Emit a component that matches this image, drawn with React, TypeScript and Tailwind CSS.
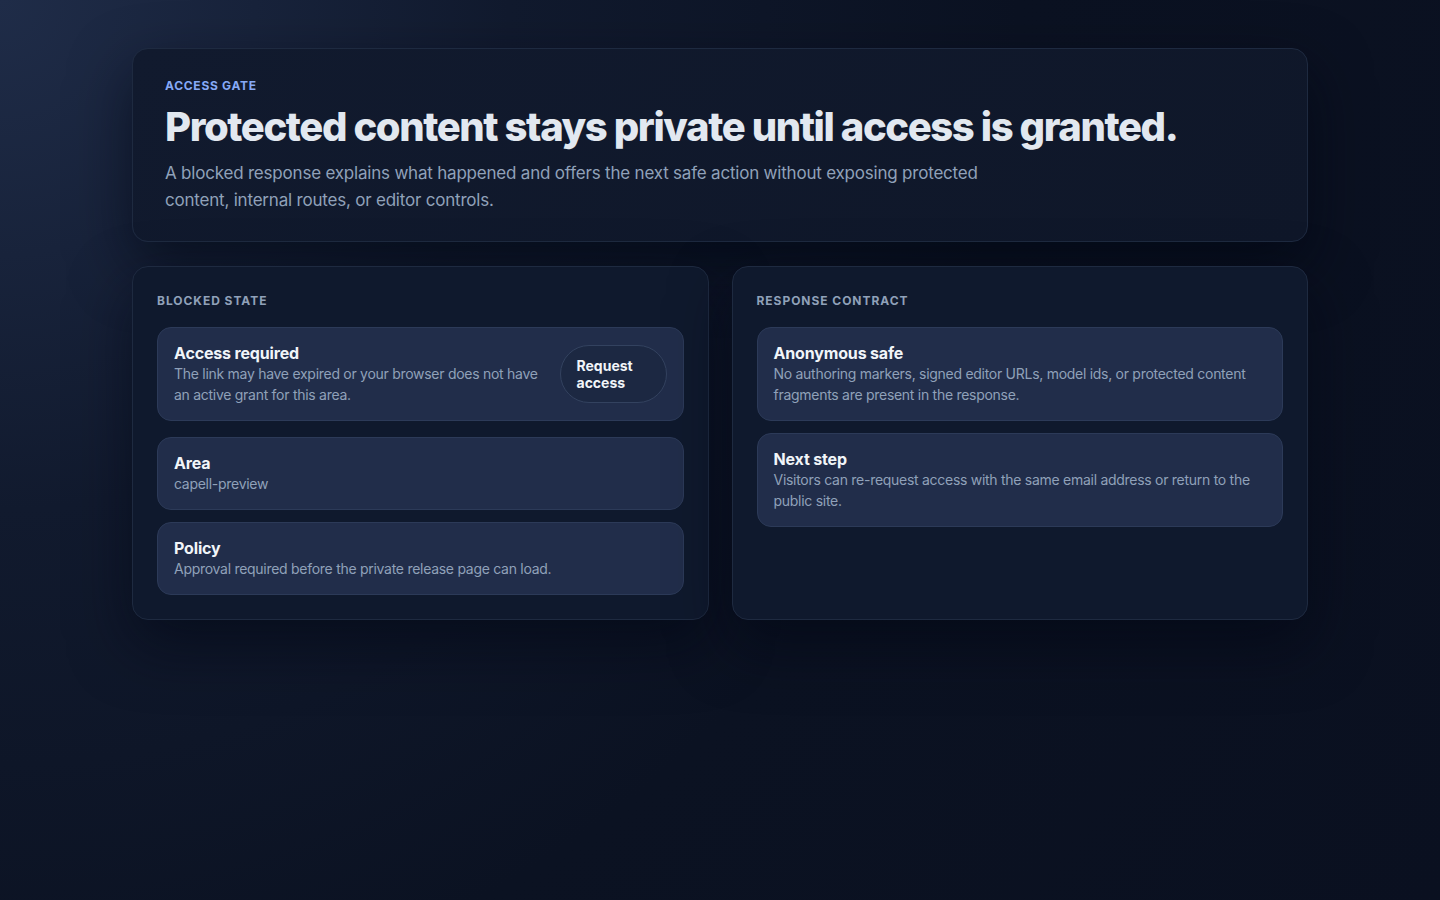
const blocked = [
    { title: "Area", body: "capell-preview" },
    { title: "Policy", body: "Approval required before the private release page can load." },
];

const contract = [
    {
        title: "Anonymous safe",
        body: "No authoring markers, signed editor URLs, model ids, or protected content fragments are present in the response.",
    },
    {
        title: "Next step",
        body: "Visitors can re-request access with the same email address or return to the public site.",
    },
];

const Item = ({ title, body }: { title: string; body: string }) => (
    <div className="rounded-[14px] border border-[#2c3a58] bg-[#212d4a] px-4 py-[15px]">
        <p className="text-base font-bold leading-5 tracking-[-0.01em] text-slate-100">{title}</p>
        <p className="text-sm leading-[21px] tracking-[-0.02em] text-slate-400">{body}</p>
    </div>
);

const Panel = ({ label, children }: { label: string; children: React.ReactNode }) => (
    <section className="rounded-2xl border border-[#1e2a40] bg-[#0f192d] p-6 shadow-[0_24px_60px_rgba(2,6,18,0.55)]">
        <h2 className="mb-[18px] mt-[2px] text-xs font-bold uppercase leading-4 tracking-[0.08em] text-slate-400">{label}</h2>
        {children}
    </section>
);

const App = () => {
    return (
        <div
            className="min-h-screen bg-[radial-gradient(circle_at_0%_0%,#1f2c48_0%,#111a2e_30%,#0b1222_60%,#0a1020_100%)] pt-12 text-slate-200"
            style={{ fontFamily: "Inter, 'Noto Sans', sans-serif" }}
        >
            <div className="mx-auto flex w-[1176px] flex-col gap-6">
                <header className="rounded-2xl border border-[#1e2a40] bg-[linear-gradient(135deg,#111a2e,#0f1729)] px-8 pb-[27px] pt-[29px] shadow-[0_24px_60px_rgba(2,6,18,0.6)]">
                    <p className="text-xs font-bold uppercase leading-4 tracking-[0.06em] text-[#86a9f7]">Access gate</p>
                    <h1 className="mt-[9px] text-[40px] font-extrabold leading-[48px] tracking-[-0.035em] text-slate-200">
                        Protected content stays private until access is granted.
                    </h1>
                    <p className="mt-[9px] max-w-[820px] text-[17px] leading-[27px] tracking-[-0.012em] text-slate-400">
                        A blocked response explains what happened and offers the next safe action without exposing protected
                        content, internal routes, or editor controls.
                    </p>
                </header>

                <div className="grid grid-cols-2 gap-[23px]">
                    <Panel label="Blocked state">
                        <div className="mb-4 flex items-center gap-4 rounded-[14px] border border-[#2c3a58] bg-[#212d4a] px-4 py-[15px]">
                            <div className="flex-1">
                                <p className="text-base font-bold leading-5 tracking-[-0.01em] text-slate-100">Access required</p>
                                <p className="text-sm leading-[21px] tracking-[-0.02em] text-slate-400">
                                    The link may have expired or your browser does not have an active grant for this area.
                                </p>
                            </div>
                            <button className="h-[58px] w-[107px] shrink-0 cursor-pointer rounded-full border border-[#33425f] bg-[#1c2842] px-4 text-left text-sm font-bold leading-[17px] text-slate-100">
                                Request access
                            </button>
                        </div>
                        <div className="flex flex-col gap-3">
                            {blocked.map((b) => (
                                <Item key={b.title} title={b.title} body={b.body} />
                            ))}
                        </div>
                    </Panel>

                    <Panel label="Response contract">
                        <div className="flex flex-col gap-3">
                            {contract.map((c) => (
                                <Item key={c.title} title={c.title} body={c.body} />
                            ))}
                        </div>
                    </Panel>
                </div>
            </div>
        </div>
    );
};

export default App;
